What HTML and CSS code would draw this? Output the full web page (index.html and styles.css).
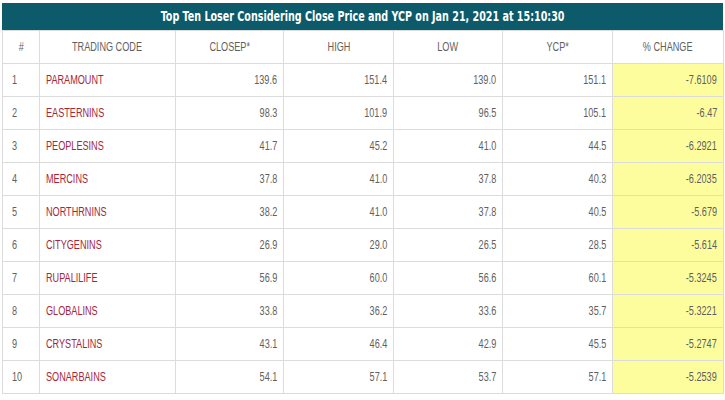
FILE: index.html
```html
<!DOCTYPE html>
<html>
<head>
<meta charset="utf-8">
<link rel="stylesheet" href="styles.css">
</head>
<body>
<div class="wrap">
<div class="title"><span class="sq">Top Ten Loser Considering Close Price and YCP on Jan 21, 2021 at 15:10:30</span></div>
<table class="grid">
<colgroup>
<col class="c-num"><col class="c-code"><col class="c-close"><col class="c-high"><col class="c-low"><col class="c-ycp"><col class="c-chg">
</colgroup>
<thead>
<tr><th><span class="sq">#</span></th><th><span class="sq">TRADING CODE</span></th><th><span class="sq">CLOSEP*</span></th><th><span class="sq">HIGH</span></th><th><span class="sq">LOW</span></th><th><span class="sq">YCP*</span></th><th><span class="sq">% CHANGE</span></th></tr>
</thead>
<tbody>
<tr><td class="n"><span class="sq">1</span></td><td class="code"><span class="sq">PARAMOUNT</span></td><td><span class="sq">139.6</span></td><td><span class="sq">151.4</span></td><td><span class="sq">139.0</span></td><td><span class="sq">151.1</span></td><td class="chg"><span class="sq">-7.6109</span></td></tr>
<tr><td class="n"><span class="sq">2</span></td><td class="code"><span class="sq">EASTERNINS</span></td><td><span class="sq">98.3</span></td><td><span class="sq">101.9</span></td><td><span class="sq">96.5</span></td><td><span class="sq">105.1</span></td><td class="chg"><span class="sq">-6.47</span></td></tr>
<tr><td class="n"><span class="sq">3</span></td><td class="code"><span class="sq">PEOPLESINS</span></td><td><span class="sq">41.7</span></td><td><span class="sq">45.2</span></td><td><span class="sq">41.0</span></td><td><span class="sq">44.5</span></td><td class="chg"><span class="sq">-6.2921</span></td></tr>
<tr><td class="n"><span class="sq">4</span></td><td class="code"><span class="sq">MERCINS</span></td><td><span class="sq">37.8</span></td><td><span class="sq">41.0</span></td><td><span class="sq">37.8</span></td><td><span class="sq">40.3</span></td><td class="chg"><span class="sq">-6.2035</span></td></tr>
<tr><td class="n"><span class="sq">5</span></td><td class="code"><span class="sq">NORTHRNINS</span></td><td><span class="sq">38.2</span></td><td><span class="sq">41.0</span></td><td><span class="sq">37.8</span></td><td><span class="sq">40.5</span></td><td class="chg"><span class="sq">-5.679</span></td></tr>
<tr><td class="n"><span class="sq">6</span></td><td class="code"><span class="sq">CITYGENINS</span></td><td><span class="sq">26.9</span></td><td><span class="sq">29.0</span></td><td><span class="sq">26.5</span></td><td><span class="sq">28.5</span></td><td class="chg"><span class="sq">-5.614</span></td></tr>
<tr><td class="n"><span class="sq">7</span></td><td class="code"><span class="sq">RUPALILIFE</span></td><td><span class="sq">56.9</span></td><td><span class="sq">60.0</span></td><td><span class="sq">56.6</span></td><td><span class="sq">60.1</span></td><td class="chg"><span class="sq">-5.3245</span></td></tr>
<tr><td class="n"><span class="sq">8</span></td><td class="code"><span class="sq">GLOBALINS</span></td><td><span class="sq">33.8</span></td><td><span class="sq">36.2</span></td><td><span class="sq">33.6</span></td><td><span class="sq">35.7</span></td><td class="chg"><span class="sq">-5.3221</span></td></tr>
<tr><td class="n"><span class="sq">9</span></td><td class="code"><span class="sq">CRYSTALINS</span></td><td><span class="sq">43.1</span></td><td><span class="sq">46.4</span></td><td><span class="sq">42.9</span></td><td><span class="sq">45.5</span></td><td class="chg"><span class="sq">-5.2747</span></td></tr>
<tr><td class="n"><span class="sq">10</span></td><td class="code"><span class="sq">SONARBAINS</span></td><td><span class="sq">54.1</span></td><td><span class="sq">57.1</span></td><td><span class="sq">53.7</span></td><td><span class="sq">57.1</span></td><td class="chg"><span class="sq">-5.2539</span></td></tr>
</tbody>
</table>
</div>
</body>
</html>
```
FILE: styles.css
```css
html, body {
  margin: 0;
  padding: 0;
  background: #fff;
}
.wrap {
  margin: 3px 2px 0 2px;
  width: 721px;
}
.sq {
  display: inline-block;
  white-space: nowrap;
  transform: scaleX(0.76);
  transform-origin: center;
}
.title {
  height: 27px;
  line-height: 27px;
  background: #0c5a6a;
  color: #fff;
  text-align: center;
  font-family: "DejaVu Sans Condensed", sans-serif;
  font-weight: bold;
  font-size: 14px;
  overflow: hidden;
}
.title .sq {
  transform: scaleX(0.76);
}
.grid {
  width: 721px;
  border-collapse: collapse;
  table-layout: fixed;
  font-family: "Liberation Sans", Arial, sans-serif;
  font-size: 12px;
  color: #5f5f5f;
}
.c-num { width: 37px; }
.c-code { width: 136px; }
.c-close { width: 108px; }
.c-high { width: 110px; }
.c-low { width: 109px; }
.c-ycp { width: 110px; }
.c-chg { width: 111px; }
.grid th, .grid td {
  border: 1px solid #dcdcdc;
  height: 33px;
  padding: 0 6px;
  box-sizing: border-box;
  overflow: visible;
}
.grid th {
  font-weight: normal;
  text-align: center;
}
.grid td {
  text-align: right;
}
.grid td .sq {
  transform-origin: right center;
}
.grid td.n {
  text-align: left;
  padding-left: 9px;
}
.grid td.n .sq,
.grid td.code .sq {
  transform-origin: left center;
}
.grid td.code {
  text-align: left;
  color: #a3263a;
  padding-left: 6px;
}
.grid td.chg {
  background: #fdfd9e;
}
```
